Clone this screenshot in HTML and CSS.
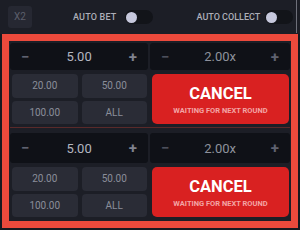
FILE: index.html
```html
<!DOCTYPE html>
<html>
<head>
<meta charset="utf-8">
<link rel="stylesheet" href="styles.css">
</head>
<body>
<div class="topbar">
  <div class="x2">X2</div>
  <div class="opt opt-bet"><span class="lbl">AUTO BET</span><span class="tog"><span class="knob"></span></span></div>
  <div class="opt opt-col"><span class="lbl">AUTO COLLECT</span><span class="tog"><span class="knob"></span></span></div>
  <div class="scroll"></div>
</div>
<div class="frame">
  <div class="bet">
    <div class="left">
      <div class="input"><span class="minus">−</span><span class="val">5.00</span><span class="plus">+</span></div>
      <div class="presets">
        <div class="pre">20.00</div><div class="pre">50.00</div>
        <div class="pre">100.00</div><div class="pre">ALL</div>
      </div>
    </div>
    <div class="right">
      <div class="input mult"><span class="minus">−</span><span class="val">2.00x</span><span class="plus">+</span></div>
      <div class="cancel"><span class="c-big">CANCEL</span><span class="c-small">WAITING FOR NEXT ROUND</span></div>
    </div>
  </div>
  <div class="sep"></div>
  <div class="bet bet2">
    <div class="left">
      <div class="input"><span class="minus">−</span><span class="val">5.00</span><span class="plus">+</span></div>
      <div class="presets">
        <div class="pre">20.00</div><div class="pre">50.00</div>
        <div class="pre">100.00</div><div class="pre">ALL</div>
      </div>
    </div>
    <div class="right">
      <div class="input mult"><span class="minus">−</span><span class="val">2.00x</span><span class="plus">+</span></div>
      <div class="cancel"><span class="c-big">CANCEL</span><span class="c-small">WAITING FOR NEXT ROUND</span></div>
    </div>
  </div>
</div>
</body>
</html>
```
FILE: styles.css
```css
html, body { margin: 0; padding: 0; }
body {
  width: 300px; height: 230px; overflow: hidden;
  background: #17191f;
  font-family: Roboto, "Liberation Sans", sans-serif;
}
.topbar {
  height: 34px; box-sizing: border-box;
  display: flex; align-items: center;
  padding: 0 0 0 8px;
  background: #1c1e26;
  position: relative;
}
.x2 {
  width: 24px; height: 22px; border-radius: 3px; flex: none;
  background: #262832; color: #5c5f6b;
  font-size: 10px; display: flex; align-items: center; justify-content: center;
  margin-top: -1px;
}
.opt { display: flex; align-items: center; gap: 8px; flex: none; white-space: nowrap; }
.opt-bet { margin-left: 41px; }
.opt-col { margin-left: 44px; gap: 5px; }
.lbl { color: #adafb9; font-size: 9px; font-weight: 500; letter-spacing: 0.2px; white-space: nowrap; }
.opt-col .lbl { letter-spacing: 0; }
.tog {
  width: 28px; height: 14px; border-radius: 7px; background: #121419; flex: none;
  display: flex; align-items: center; padding-left: 1px; box-sizing: border-box;
}
.knob { width: 11px; height: 11px; border-radius: 50%; background: #c6c8dc; }
.scroll { position: absolute; right: 3px; top: 0; width: 1px; height: 33px; background: #6e707a; }

.frame {
  margin: 0 2px 0 2px; height: 194px; box-sizing: border-box;
  border: 7px solid #ec4a3c;
  background: #1c1e26;
  padding: 2px 1px 0 1px;
}
.bet { display: flex; gap: 2px; height: 81px; }
.sep { height: 1px; margin: 3px 0 0; background: #5a2a2a; }
.bet2 { margin-top: 5px; height: 84px; }
.left { width: 138px; display: flex; flex-direction: column; gap: 4px; }
.right { flex: 1; display: flex; flex-direction: column; gap: 4px; }
.input {
  height: 27px; flex: none; background: #0f1117; border-radius: 3px;
  display: flex; align-items: center; justify-content: space-between;
  padding: 0 11px 0 11px;
}
.bet2 .input { height: 30px; }
.minus { color: #5f6270; font-size: 15px; font-weight: 700; }
.plus { color: #7f828e; font-size: 15px; font-weight: 700; }
.val { color: #b4b6c0; font-size: 13px; }
.mult .val { color: #8e919c; }
.mult .minus { color: #4c4f5b; }
.mult .plus { color: #5f6270; }
.presets { flex: 1; display: grid; grid-template-columns: 1fr 1fr; gap: 3px 4px; padding: 0 1px 0 2px; }
.pre {
  background: #2a2c36; border-radius: 4px; color: #8b8e9a;
  font-size: 10px; display: flex; align-items: center; justify-content: center;
}
.cancel {
  flex: 1; background: #d92121; border-radius: 5px; margin: 0 1px 0 2px;
  display: flex; flex-direction: column; align-items: center; justify-content: center;
}
.c-big { color: #ffffff; font-size: 16.5px; font-weight: 700; line-height: 17px; margin-top: 2px; }
.c-small { color: #f3a5a5; font-size: 7.5px; font-weight: 700; margin-top: 4px; white-space: nowrap; }
```
